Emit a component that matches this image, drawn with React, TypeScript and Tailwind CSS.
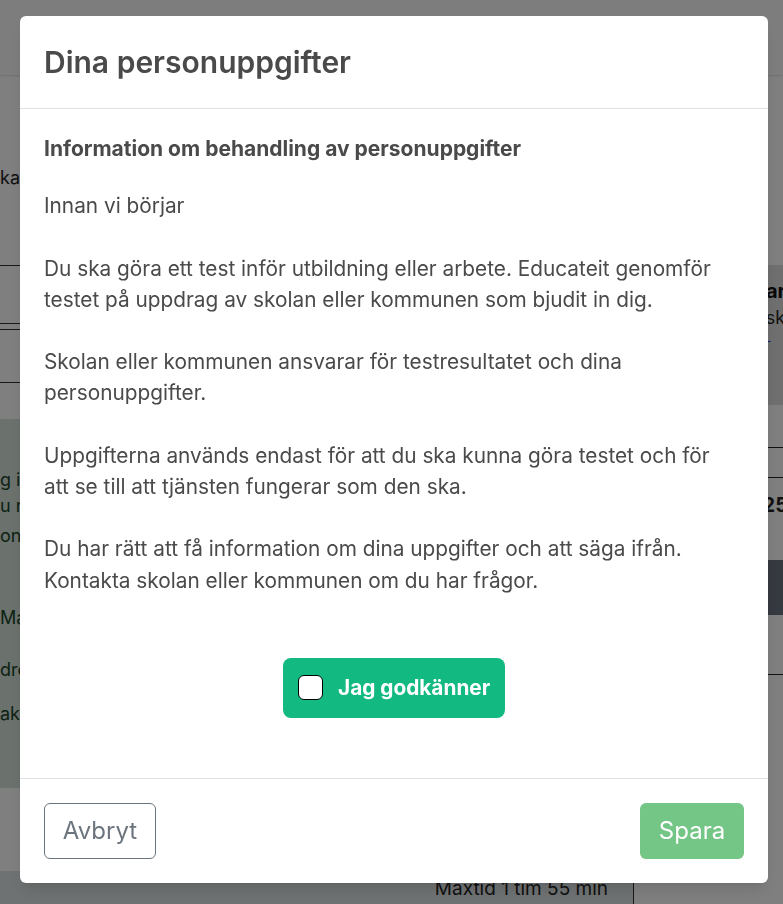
import React, { useState } from "react";

// Page that sits behind the dialog (mostly hidden by it)
const BackgroundPage: React.FC = () => (
  <div className="min-h-screen bg-white text-[#222] overflow-hidden">
    <header className="h-[75px] bg-[#fafafa] shadow-sm" />
    <div className="flex">
      <main className="w-[634px] shrink-0 border-r border-[#333]">
        <div className="h-[191px] pt-[89px] border-b border-[#333] text-[18px] leading-[28px] whitespace-nowrap">
          kan du se vilka test du ska göra
        </div>
        <div className="h-[58px] border-b border-[#333]" />
        <div className="h-[6px] border-b border-[#333]" />
        <div className="h-[53px] border-b border-[#333]" />
        <div className="h-[36px]" />
        <div className="h-[369px] bg-[#d6e2d8] text-[#16452a] text-[18px] leading-[26px] whitespace-nowrap pt-[48px]">
          <p>g inför testet</p>
          <p>u r kan pausa testet</p>
          <p className="mt-[4px]">one besked</p>
          <p className="mt-[56px]">Mac eller PC</p>
          <p className="mt-[26px]">dro testet</p>
          <p className="mt-[18px]">akt skolan</p>
        </div>
        <div className="h-[83px]" />
        <div className="h-[40px] bg-[#dee4e4] flex justify-end items-start pr-[25px] text-[19px] leading-[36px]">
          Maxtid 1 tim 55 min
        </div>
      </main>
      <aside className="flex-1">
        <div className="h-[190px]" />
        <div className="h-[140px] bg-[#dedede] pt-[14px] whitespace-nowrap">
          <p className="pl-[107px] text-[20px] font-bold leading-[24px] text-[#111]">Svar</p>
          <p className="pl-[110px] text-[18px] leading-[30px] text-[#222]">Resk</p>
          <p className="pl-[132px] text-[12px] leading-[16px] text-[#1d4ed8]">-</p>
        </div>
        <div className="h-[43px] border-b border-[#222]" />
        <div className="h-[30px] border-b border-[#222]" />
        <div className="h-[82px] pl-[120px] pt-[12px] text-[20px] font-bold text-[#222]">125</div>
        <div className="h-[55px] bg-[#6b7280]" />
        <div className="h-[60px] border-b border-[#222]" />
      </aside>
    </div>
  </div>
);

const App: React.FC = () => {
  const [agreed, setAgreed] = useState(false);

  return (
    <div className="relative min-h-screen [font-family:Inter,'Noto_Sans',sans-serif]">
      <BackgroundPage />

      {/* Modal overlay */}
      <div className="fixed inset-0 bg-black/50 flex items-start justify-start">
        <div className="ml-[20px] mt-[16px] w-[748px] bg-white rounded-md shadow-lg flex flex-col text-[#4a4a4a]">
          <div className="px-6 py-[28px] border-b border-[#dee2e6]">
            <h1 className="text-[30px] leading-[36px] font-semibold">Dina personuppgifter</h1>
          </div>

          <div className="pl-6 pr-[48px] pt-6 pb-[60px] text-[20.8px] leading-[31.2px]">
            <h2 className="font-bold mb-[26px] text-[21px]">Information om behandling av personuppgifter</h2>
            <p className="mb-[31.2px]">Innan vi börjar</p>
            <p className="mb-[31.2px]">
              Du ska göra ett test inför utbildning eller arbete. Educateit genomför testet på uppdrag av
              skolan eller kommunen som bjudit in dig.
            </p>
            <p className="mb-[31.2px]">
              Skolan eller kommunen ansvarar för testresultatet och dina personuppgifter.
            </p>
            <p className="mb-[31.2px]">
              Uppgifterna används endast för att du ska kunna göra testet och för att se till att tjänsten
              fungerar som den ska.
            </p>
            <p>
              Du har rätt att få information om dina uppgifter och att säga ifrån.
              <br />
              Kontakta skolan eller kommunen om du har frågor.
            </p>

            <div className="flex justify-center mt-[62px] mr-[-24px]">
              <label className="flex items-center h-[60px] w-[222px] pl-[15px] gap-[15px] rounded-lg bg-[#12b981] text-white font-bold cursor-pointer">
                <input
                  type="checkbox"
                  checked={agreed}
                  onChange={(e) => setAgreed(e.target.checked)}
                  className="appearance-none w-[25px] h-[25px] rounded-md border border-black bg-white shrink-0 checked:bg-[#0d6efd]"
                />
                <span className="whitespace-nowrap">Jag godkänner</span>
              </label>
            </div>
          </div>

          <div className="flex items-center justify-between px-6 py-6 border-t border-[#dee2e6]">
            <button className="h-[56px] w-[112px] rounded-md border border-[#6c757d] text-[#6c757d] text-[24px] bg-white">
              Avbryt
            </button>
            <button
              disabled={!agreed}
              className={
                agreed
                  ? "h-[56px] w-[104px] rounded-md bg-[#198754] text-white text-[24px]"
                  : "h-[56px] w-[104px] rounded-md bg-[#74c687] text-white text-[24px]"
              }
            >
              Spara
            </button>
          </div>
        </div>
      </div>
    </div>
  );
};

export default App;
